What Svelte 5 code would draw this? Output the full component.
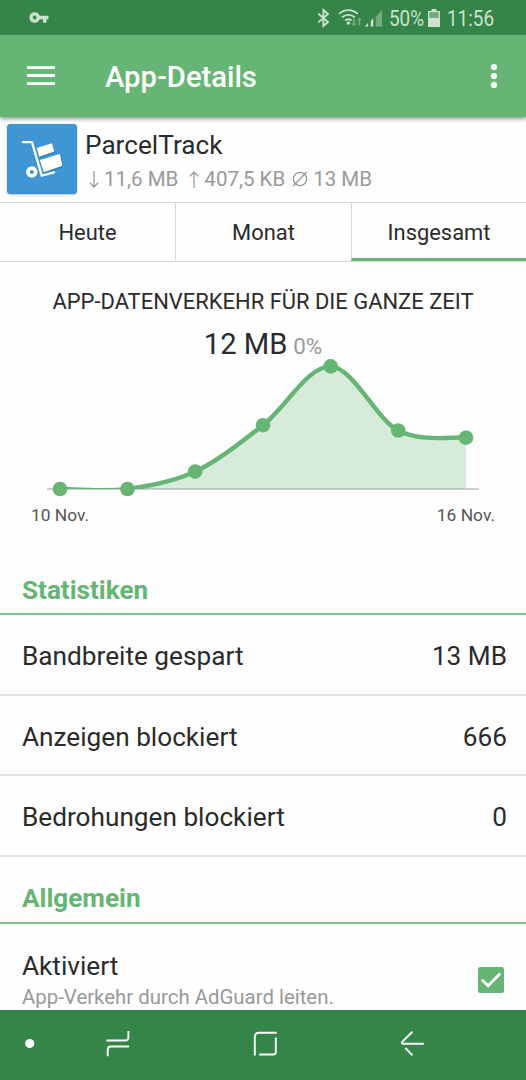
<script lang="ts">
  type Point = { x: number; y: number };

  const tabs = ["Heute", "Monat", "Insgesamt"];
  let activeTab = $state("Insgesamt");
  let enabled = $state(true);

  const stats = [
    { label: "Bandbreite gespart", value: "13 MB" },
    { label: "Anzeigen blockiert", value: "666" },
    { label: "Bedrohungen blockiert", value: "0" },
  ];

  const baseline = 133;
  const points: Point[] = [
    { x: 60, y: 133 },
    { x: 127.5, y: 133 },
    { x: 195.2, y: 115.6 },
    { x: 263, y: 69.2 },
    { x: 330.7, y: 10.4 },
    { x: 398.2, y: 74.5 },
    { x: 466, y: 81.7 },
  ];

  // Catmull-Rom as cubics, each control point follows the slope of its neighbours
  function smooth(pts: Point[], k = 1 / 6): string {
    const at = (i: number) => pts[Math.min(Math.max(i, 0), pts.length - 1)];
    let d = `M${pts[0].x} ${pts[0].y}`;
    for (let i = 0; i < pts.length - 1; i++) {
      const a = pts[i];
      const b = pts[i + 1];
      const c1x = a.x + (b.x - at(i - 1).x) * k;
      const c1y = a.y + (b.y - at(i - 1).y) * k;
      const c2x = b.x - (at(i + 2).x - a.x) * k;
      const c2y = b.y - (at(i + 2).y - a.y) * k;
      d += ` C${c1x} ${c1y} ${c2x} ${c2y} ${b.x} ${b.y}`;
    }
    return d;
  }

  let line = $derived(smooth(points));
  let area = $derived(`${line} V${baseline} H${points[0].x} Z`);
</script>

<div class="screen">
  <div class="status-bar">
    <svg class="key" width="20" height="12" viewBox="0 0 20 12">
      <path fill-rule="evenodd" d="M5.7 0.3a5.2 5.2 0 1 0 4.9 7H14V10.7H17.5V7.3H19.5V3.7H10.6A5.2 5.2 0 0 0 5.7 .3zM5.7 3.6a1.9 1.9 0 1 1 0 3.8a1.9 1.9 0 0 1 0-3.8z" />
    </svg>
    <svg class="status-icons" width="66" height="20" viewBox="0 0 66 20">
      <path class="stroke" stroke-width="1.9" d="M1.3 5.6 11 14 6.4 18V2L11 6 1.3 14.4" />
      <path class="stroke" stroke-width="1.8" d="M22 5.8C27.5.8 35.3.8 40.8 5.8M25 9.2C28.8 6 34 6 37.8 9.2M28.2 12.5C30.2 10.9 32.6 10.9 34.6 12.5" />
      <circle cx="31.4" cy="15.1" r="1.7" />
      <g class="dim">
        <path d="M36 10.8h1.8v4.4h1.9L36.9 18.5l-2.8-3.3H36zM41.6 17.5h1.5v-4.9h1.6L42.4 9.5 40 12.6h1.6z" />
        <path d="M58.8 9 65 1.8V18.4H58.8z" />
      </g>
      <path d="M47.7 18.4 51 15.1V18.4zM53.8 18.4V12.7L56.2 10.3V18.4z" />
    </svg>
    <span class="battery-text"><span class="condensed">50%</span></span>
    <svg class="battery" width="12" height="18" viewBox="0 0 12 18">
      <path d="M3.6 0h4.8v2H12V18H0V2H3.6zM1.6 3.6V9H10.4V3.6z" fill-rule="evenodd" />
      <path class="dim" d="M1.6 3.6H10.4V9H1.6z" />
    </svg>
    <span class="clock"><span class="condensed">11:56</span></span>
  </div>

  <header class="app-bar">
    <button class="icon-button" aria-label="Menü">
      <svg width="28" height="20" viewBox="0 0 28 20">
        <path d="M0 .2h28v2.9H0zM0 8.1h28v2.9H0zM0 16.2h28v2.9H0z" />
      </svg>
    </button>
    <h1>App-Details</h1>
    <button class="icon-button" aria-label="Mehr">
      <svg width="8" height="26" viewBox="0 0 8 26">
        <circle cx="4" cy="4" r="3.1" />
        <circle cx="4" cy="13" r="3.1" />
        <circle cx="4" cy="21.9" r="3.1" />
      </svg>
    </button>
  </header>

  <section class="app-info">
    <svg class="app-icon" width="70" height="70" viewBox="0 0 70 70">
      <rect width="70" height="70" rx="3.5" fill="#3a8fce" />
      <rect x=".5" y=".5" width="69" height="68" rx="3" fill="#4096d4" />
      <g class="cart-shadow" transform="translate(.3 1.3)">
        <path d="M29.5 24 45 19 48 27.5 32.5 33zM33 37 54 29.5 55.5 42 37 48.5z" />
      </g>
      <path fill="none" stroke="#fff" stroke-width="2.3" stroke-linecap="round" stroke-linejoin="round" d="M16 18.2H25L34.7 51.6 47 48.3" />
      <path fill="#fff" d="M29.8 24 45 19.2 47.3 27.6 32.2 32.8zM32.8 36 53 29.9 55.4 41.7 36.7 48.2z" />
      <circle cx="24.8" cy="48" r="3.9" fill="none" stroke="#fff" stroke-width="3.6" />
    </svg>
    <div class="app-text">
      <h2>ParcelTrack</h2>
      <p class="traffic">
        <svg width="10" height="19" viewBox="0 0 10 19"><path d="M5 1V17M.8 12.6 5 17 9.2 12.6" /></svg>
        <span class="down">11,6 MB</span>
        <svg width="10" height="19" viewBox="0 0 10 19"><path d="M5 18V2M.8 6.4 5 2 9.2 6.4" /></svg>
        <span class="up">407,5 KB</span>
        <svg class="average" width="16" height="19" viewBox="0 0 16 19"><circle cx="8" cy="9" r="6.6" /><path d="M1.3 16 14.7 2" /></svg>
        <span>13 MB</span>
      </p>
    </div>
  </section>

  <nav class="tabs">
    {#each tabs as tab}
      <button class:active={activeTab === tab} onclick={() => { activeTab = tab; }}>{tab}</button>
    {/each}
  </nav>

  <section class="chart">
    <h3>APP-DATENVERKEHR FÜR DIE GANZE ZEIT</h3>
    <p class="total">12 MB <small>0%</small></p>
    <svg class="plot" width="526" height="142" viewBox="0 0 526 142" role="img" aria-label="Datenverkehr">
      <defs>
        <clipPath id="above"><rect width="526" height={baseline} /></clipPath>
      </defs>
      <path class="axis" d="M47 133H479" />
      <path class="area" d={area} clip-path="url(#above)" />
      <path class="curve" d={line} clip-path="url(#above)" />
      {#each points as p}
        <circle class="dot" cx={p.x} cy={p.y} r="7.3" />
      {/each}
    </svg>
    <div class="dates"><span>10 Nov.</span><span>16 Nov.</span></div>
  </section>

  <h2 class="group-title">Statistiken</h2>
  {#each stats as row}
    <div class="row">
      <span>{row.label}</span>
      <span>{row.value}</span>
    </div>
  {/each}

  <h2 class="group-title general">Allgemein</h2>
  <div class="setting">
    <div>
      <p class="setting-name">Aktiviert</p>
      <p class="setting-hint">App-Verkehr durch AdGuard leiten.</p>
    </div>
    <button class="checkbox" class:checked={enabled} role="checkbox" aria-checked={enabled} aria-label="Aktiviert" onclick={() => { enabled = !enabled; }}>
      {#if enabled}
        <svg width="26" height="26" viewBox="0 0 26 26"><path d="M3.8 12.8 10.2 18.7 22.2 6.5" /></svg>
      {/if}
    </button>
  </div>

  <footer class="nav-bar">
    <svg width="526" height="70" viewBox="0 0 526 70">
      <circle cx="29.7" cy="33.5" r="4.6" />
      <path d="M106.5 30.5H125.2Q128.4 30.5 128.4 27.3V21M129 36.5H111Q107.7 36.5 107.7 39.7V46.2" />
      <path d="M254.8 45.6V27Q254.8 22.7 259 22.7H276.8M275.8 27.5V42.2Q275.8 44.5 273.2 44.5H259.2" />
      <path d="M423.7 33.7H402.5Q401.2 33 402.5 31.5L412.4 21.8M405.3 37.8 412.4 45.3" />
    </svg>
  </footer>
</div>

<style>
  :global(body) {
    margin: 0;
  }

  .screen {
    display: flex;
    flex-direction: column;
    width: 526px;
    height: 1080px;
    overflow: hidden;
    background: #fefefe;
    color: #2b2b2b;
    font-family: Roboto, "Liberation Sans", sans-serif;
  }

  .screen > * {
    flex: none;
  }

  h1, h2, h3, p {
    margin: 0;
    font-weight: 400;
  }

  button {
    padding: 0;
    border: 0;
    background: none;
    font: inherit;
    color: inherit;
  }

  svg {
    display: block;
    flex: none;
  }

  .status-bar {
    display: flex;
    align-items: center;
    height: 35px;
    box-sizing: border-box;
    padding-left: 29px;
    background: #358548;
    color: #cce1d0;
    fill: #cce1d0;
  }

  .status-icons {
    margin: 0 6px 0 268px;
    fill: #cce1d0;
  }

  .stroke {
    fill: none;
    stroke: #cce1d0;
  }

  .dim {
    fill: #74ab80;
  }

  .battery-text {
    width: 39px;
  }

  .clock {
    margin-left: 7px;
  }

  .condensed {
    display: block;
    width: max-content;
    font-size: 21.6px;
    line-height: 35px;
    transform: translateY(1px) scaleX(.875);
    transform-origin: left;
  }

  .app-bar {
    display: flex;
    align-items: center;
    height: 82px;
    box-sizing: border-box;
    padding: 0 28px 0 27px;
    background: #66b574;
    color: #fff;
    fill: #fff;
    box-shadow: 0 2px 4px rgba(0, 0, 0, .4);
    clip-path: inset(0 0 -10px 0);
    z-index: 1;
  }

  .app-bar h1 {
    flex: 1;
    margin-left: 50px;
    padding-top: 1px;
    font-size: 29.2px;
    font-weight: 500;
  }

  .app-info {
    display: flex;
    height: 85px;
    box-sizing: content-box;
    border-bottom: 1px solid #d6d6d6;
  }

  .app-icon {
    margin: 7px 8px 0 7px;
    filter: drop-shadow(0 1px 1px rgba(0, 0, 0, .25));
  }

  .cart-shadow {
    fill: #347fb9;
  }

  .app-text {
    padding-top: 11px;
  }

  .app-text h2 {
    font-size: 26.2px;
    line-height: 34px;
  }

  .traffic {
    display: flex;
    align-items: center;
    height: 34px;
    padding-left: 4px;
    font-size: 20.5px;
    color: #999;
  }

  .traffic svg {
    margin-right: 5px;
    fill: none;
    stroke: #999;
    stroke-width: 1.3;
  }

  .down {
    margin-right: 11px;
  }

  .up {
    margin-right: 7px;
  }

  .tabs {
    display: grid;
    grid-template-columns: 175px 176px 175px;
    height: 59px;
    box-sizing: border-box;
    border-bottom: 1px solid #d6d6d6;
  }

  .tabs button {
    padding-top: 4px;
    font-size: 21.9px;
    border-bottom: 3px solid transparent;
  }

  .tabs button + button {
    border-left: 1px solid #d6d6d6;
  }

  .tabs .active {
    border-bottom-color: #66b574;
  }

  .chart {
    display: flex;
    flex-direction: column;
    height: 304px;
    text-align: center;
  }

  .chart h3 {
    padding-top: 26px;
    font-size: 21.95px;
    line-height: 28px;
  }

  .total {
    height: 40px;
    font-size: 29.2px;
    line-height: 57px;
  }

  .total small {
    margin-left: -1.5px;
    font-size: 22.4px;
    color: #999;
  }

  .axis {
    stroke: #bdbdbd;
    stroke-width: 1.5;
  }

  .area {
    fill: #66b574;
    fill-opacity: .26;
  }

  .curve {
    fill: none;
    stroke: #66b574;
    stroke-width: 4.4;
  }

  .dot {
    fill: #66b574;
  }

  .dates {
    display: flex;
    justify-content: space-between;
    padding: 6px 31px 0 31px;
    font-size: 17.4px;
    line-height: 22px;
    color: #555;
  }

  .group-title {
    height: 49px;
    box-sizing: border-box;
    padding-left: 22px;
    border-bottom: 2px solid #7fc28b;
    font-size: 26.1px;
    font-weight: 700;
    line-height: 48px;
    color: #66b574;
  }

  .row {
    display: flex;
    align-items: center;
    justify-content: space-between;
    height: 80.7px;
    box-sizing: border-box;
    padding: 3px 19px 0 22px;
    border-bottom: 2px solid #e0e0e0;
    font-size: 26.2px;
  }

  .general {
    height: 67px;
    line-height: 82px;
  }

  .setting {
    display: flex;
    justify-content: space-between;
    height: 86px;
    box-sizing: border-box;
    padding: 26px 22px 0;
  }

  .setting-name {
    font-size: 26.2px;
    line-height: 32px;
  }

  .setting-hint {
    font-size: 20.4px;
    line-height: 30px;
    color: #999;
  }

  .checkbox {
    width: 26px;
    height: 26px;
    margin-top: 17px;
    border-radius: 2.5px;
    background: #dedede;
  }

  .checkbox.checked {
    background: #66b574;
  }

  .checkbox path {
    fill: none;
    stroke: #fff;
    stroke-width: 2.8;
  }

  .nav-bar {
    height: 70px;
    background: #358548;
    z-index: 1;
  }

  .nav-bar circle {
    fill: #fff;
  }

  .nav-bar path {
    fill: none;
    stroke: #fff;
    stroke-width: 1.9;
  }
</style>
